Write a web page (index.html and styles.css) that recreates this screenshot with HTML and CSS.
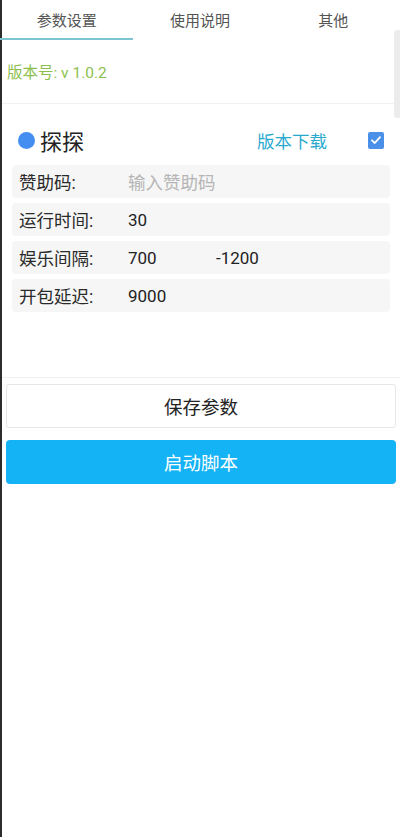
FILE: index.html
```html
<!DOCTYPE html>
<html lang="zh">
<head>
<meta charset="utf-8">
<title>参数设置</title>
<link rel="stylesheet" href="styles.css">
</head>
<body>
<div class="app">
  <nav class="tabs">
    <div class="tab active">参数设置</div>
    <div class="tab">使用说明</div>
    <div class="tab">其他</div>
  </nav>
  <div class="scroll-hint"></div>
  <div class="version">版本号: v 1.0.2</div>
  <div class="divider"></div>
  <section class="card">
    <div class="card-head">
      <span class="dot"></span>
      <span class="title">探探</span>
      <span class="download">版本下载</span>
      <span class="check">
        <svg viewBox="0 0 16 16" width="16" height="16"><path d="M4 8.3 L6.8 11 L12 5.2" fill="none" stroke="#fff" stroke-width="1.8" stroke-linecap="round" stroke-linejoin="round"/></svg>
      </span>
    </div>
    <div class="row"><span class="label">赞助码:</span><span class="value placeholder">输入赞助码</span></div>
    <div class="row"><span class="label">运行时间:</span><span class="value">30</span></div>
    <div class="row"><span class="label">娱乐间隔:</span><span class="value short">700</span><span class="value">-1200</span></div>
    <div class="row"><span class="label">开包延迟:</span><span class="value">9000</span></div>
  </section>
  <div class="divider bottom"></div>
  <div class="buttons">
    <div class="btn save">保存参数</div>
    <div class="btn start">启动脚本</div>
  </div>
</div>
</body>
</html>
```

FILE: styles.css
```css
html, body {
  margin: 0;
  padding: 0;
  background: #fff;
}
body {
  font-family: Roboto, "Noto Sans CJK SC", "Noto Sans", sans-serif;
  color: #222;
}
.app {
  position: relative;
  min-height: 837px;
  border-left: 2px solid #2c2c2c;
  box-sizing: border-box;
}
.tabs {
  display: grid;
  grid-template-columns: 1fr 1fr 1fr;
  height: 42px;
  margin-left: -2px;
}
.tab {
  display: flex;
  justify-content: center;
  align-items: center;
  font-size: 15px;
  color: #555;
  height: 40px;
  box-sizing: border-box;
  border-bottom: 2px solid transparent;
}
.tab.active {
  border-bottom-color: #7cc4cf;
}
.scroll-hint {
  position: absolute;
  right: 0;
  top: 30px;
  width: 6px;
  height: 88px;
  background: #ececec;
  border-radius: 3px 0 0 3px;
}
.version {
  color: #8dbf4f;
  font-size: 15.5px;
  padding: 21px 5px 0;
  height: 40px;
  line-height: 20px;
}
.divider {
  height: 1px;
  background: #f0f0f0;
}
.card {
  padding: 0 10px 5px;
}
.card-head {
  display: flex;
  align-items: center;
  height: 50px;
  padding: 11px 6px 0 6px;
}
.dot {
  width: 17px;
  height: 17px;
  border-radius: 50%;
  background: #448ef2;
  margin-right: 5px;
}
.title {
  font-size: 22px;
  color: #222;
  flex: 1;
}
.download {
  font-size: 17.5px;
  color: #2aa9cf;
  margin-right: 41px;
}
.check {
  width: 16px;
  height: 17px;
  border-radius: 2px;
  background: #4a90e8;
  display: flex;
  align-items: center;
  justify-content: center;
}
.row {
  display: flex;
  align-items: center;
  height: 33px;
  background: #f6f6f6;
  border-radius: 4px;
  margin: 0 0 5px 0;
  padding-left: 7px;
  font-size: 17.5px;
}
.row:last-child {
  margin-bottom: 0;
}
.label {
  width: 109px;
  color: #2a2a2a;
}
.value {
  color: #222;
  font-size: 17px;
}
.value.short {
  width: 88px;
}
.placeholder {
  color: #b5b5b5;
  font-size: 17.5px;
}
.divider.bottom {
  margin-top: 60px;
}
.buttons {
  padding: 6px 4px 0 4px;
  display: flex;
  flex-direction: column;
  gap: 12px;
}
.btn {
  height: 44px;
  display: flex;
  justify-content: center;
  align-items: center;
  font-size: 18.5px;
  border-radius: 3px;
  box-sizing: border-box;
}
.btn.save {
  border: 1px solid #e6e6e6;
  color: #222;
  background: #fff;
}
.btn.start {
  background: #14b3f6;
  color: #fff;
  border-radius: 4px;
}
```
